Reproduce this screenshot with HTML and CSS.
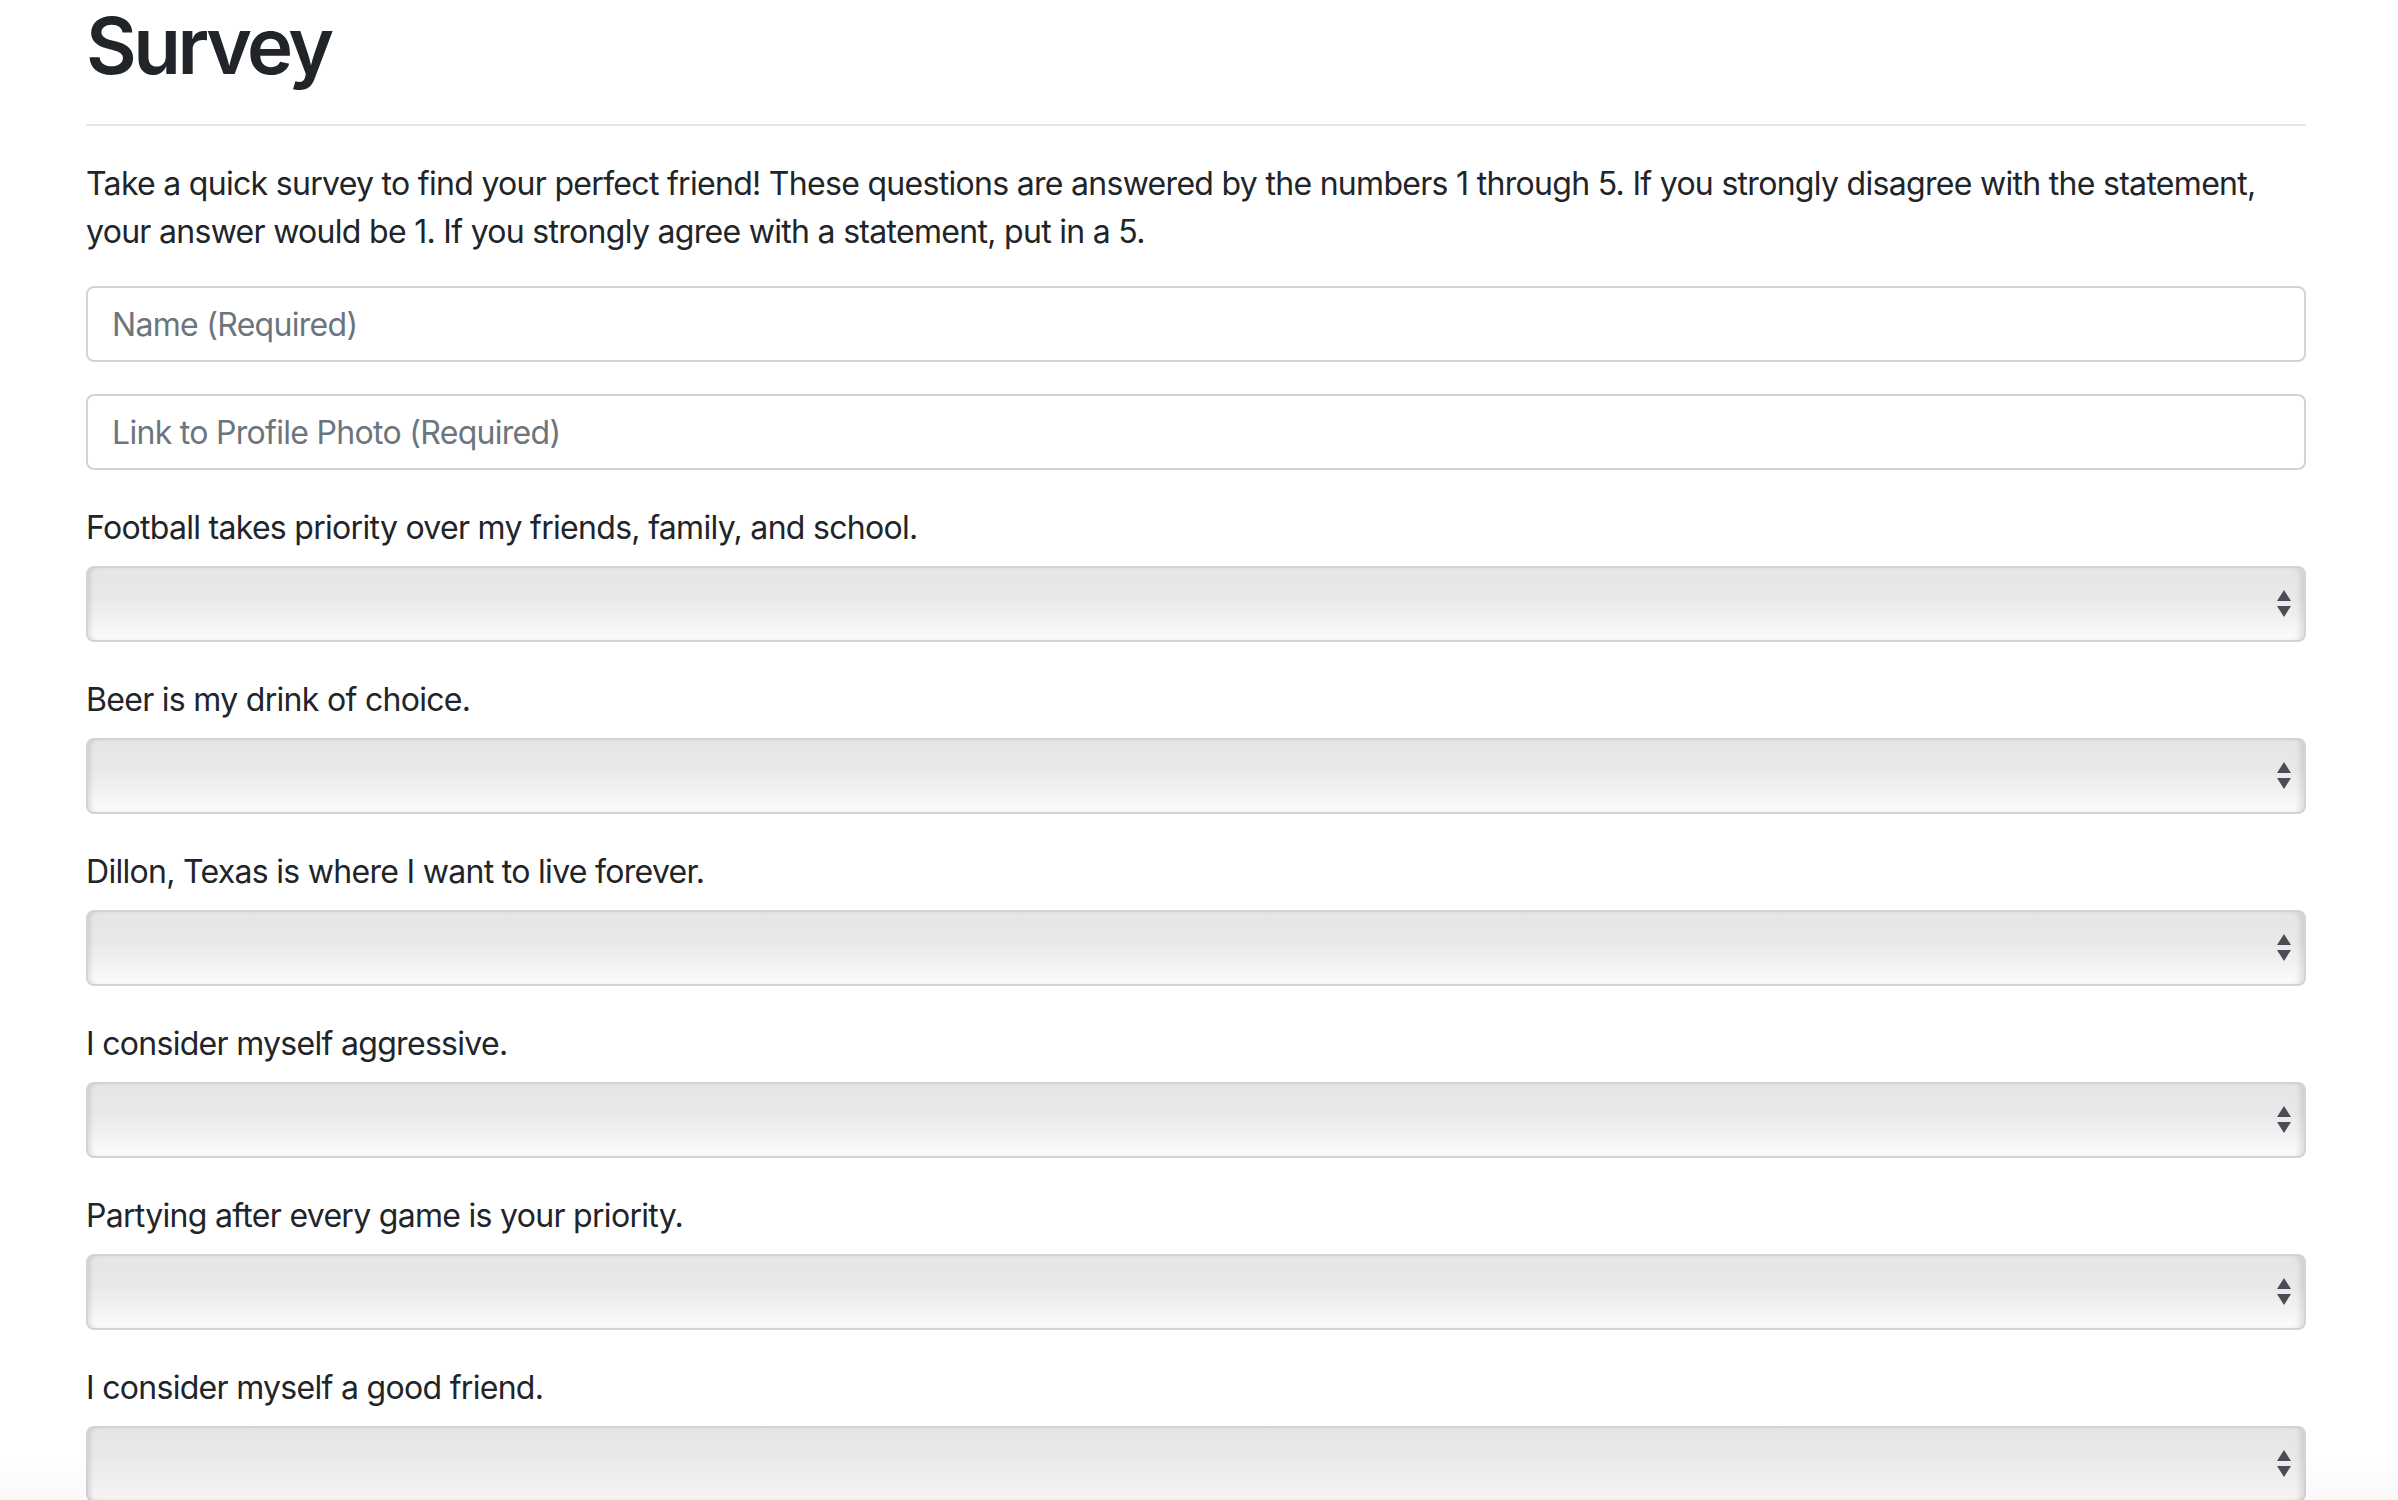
FILE: index.html
```html
<!DOCTYPE html>
<html lang="en">
<head>
<meta charset="utf-8">
<title>Survey</title>
<link rel="stylesheet" href="styles.css">
</head>
<body>
<div class="container">
  <h1 class="title">Survey</h1>
  <hr class="rule">
  <p class="intro">Take a quick survey to find your perfect friend! These questions are answered by the numbers 1 through 5. If you strongly disagree with the statement, your answer would be 1. If you strongly agree with a statement, put in a 5.</p>
  <form class="survey">
    <div class="form-group"><input class="form-control" type="text" placeholder="Name (Required)"></div>
    <div class="form-group"><input class="form-control" type="text" placeholder="Link to Profile Photo (Required)"></div>

    <div class="form-group">
      <label class="q-label">Football takes priority over my friends, family, and school.</label>
      <div class="select-wrap"><select class="select"><option></option></select>
        <svg class="arrows" viewBox="0 0 16 30" width="16" height="30"><path d="M8 1 L15 12 L1 12 Z M1 17 L15 17 L8 28 Z" fill="#4a4e54"/></svg></div>
    </div>
    <div class="form-group">
      <label class="q-label">Beer is my drink of choice.</label>
      <div class="select-wrap"><select class="select"><option></option></select>
        <svg class="arrows" viewBox="0 0 16 30" width="16" height="30"><path d="M8 1 L15 12 L1 12 Z M1 17 L15 17 L8 28 Z" fill="#4a4e54"/></svg></div>
    </div>
    <div class="form-group">
      <label class="q-label">Dillon, Texas is where I want to live forever.</label>
      <div class="select-wrap"><select class="select"><option></option></select>
        <svg class="arrows" viewBox="0 0 16 30" width="16" height="30"><path d="M8 1 L15 12 L1 12 Z M1 17 L15 17 L8 28 Z" fill="#4a4e54"/></svg></div>
    </div>
    <div class="form-group">
      <label class="q-label">I consider myself aggressive.</label>
      <div class="select-wrap"><select class="select"><option></option></select>
        <svg class="arrows" viewBox="0 0 16 30" width="16" height="30"><path d="M8 1 L15 12 L1 12 Z M1 17 L15 17 L8 28 Z" fill="#4a4e54"/></svg></div>
    </div>
    <div class="form-group">
      <label class="q-label">Partying after every game is your priority.</label>
      <div class="select-wrap"><select class="select"><option></option></select>
        <svg class="arrows" viewBox="0 0 16 30" width="16" height="30"><path d="M8 1 L15 12 L1 12 Z M1 17 L15 17 L8 28 Z" fill="#4a4e54"/></svg></div>
    </div>
    <div class="form-group">
      <label class="q-label">I consider myself a good friend.</label>
      <div class="select-wrap"><select class="select"><option></option></select>
        <svg class="arrows" viewBox="0 0 16 30" width="16" height="30"><path d="M8 1 L15 12 L1 12 Z M1 17 L15 17 L8 28 Z" fill="#4a4e54"/></svg></div>
    </div>
  </form>
</div>
<div class="bottom-fade"></div>
</body>
</html>
```
FILE: styles.css
```css
* { box-sizing: border-box; }
html, body { margin: 0; padding: 0; background: #fff; }
body {
  font-family: "Inter", "Roboto", "Liberation Sans", sans-serif;
  font-size: 32px;
  line-height: 48px;
  color: #212529;
  overflow: hidden;
  height: 1500px;
}
.container {
  width: 2220px;
  margin-left: 86px;
}
.title {
  margin: 0;
  font-family: "Inter", "Liberation Sans", sans-serif;
  font-size: 78px;
  font-weight: 600;
  line-height: 92px;
  letter-spacing: -3.5px;
  color: #212529;
  height: 96px;
}
.rule {
  margin: 28px 0 32px;
  border: 0;
  border-top: 2px solid #e6e6e6;
  height: 0;
}
.intro {
  margin: 0 0 32px;
  padding-top: 2px;
  margin-bottom: 30px;
  letter-spacing: -0.7px;
}
.survey { margin: 0; }
.form-group { margin-bottom: 32px; }
.form-control {
  display: block;
  width: 100%;
  height: 76px;
  padding: 12px 24px;
  font-family: inherit;
  font-size: 32px;
  letter-spacing: -0.7px;
  color: #495057;
  background: #fff;
  border: 2px solid #ced4da;
  border-radius: 8px;
  outline: none;
}
.form-control::placeholder { color: #6c757d; opacity: 1; }
.q-label {
  display: block;
  padding-top: 2px;
  margin-bottom: 14px;
  letter-spacing: -0.7px;
}
.select-wrap { position: relative; }
.select {
  display: block;
  width: 100%;
  height: 76px;
  -webkit-appearance: none;
  appearance: none;
  border: 2px solid #cfd4d9;
  border-radius: 8px;
  background: linear-gradient(to bottom, #e6e6e6 0%, #e8e8e8 40%, #f0f0f0 65%, #fbfbfb 100%);
  box-shadow: inset 5px 0 5px -3px rgba(0,0,0,0.12), inset -6px 0 6px -3px rgba(0,0,0,0.12);
  outline: none;
  font-size: 32px;
}
.arrows {
  position: absolute;
  right: 14px;
  top: 23px;
}
.bottom-fade {
  position: fixed;
  left: 0;
  right: 0;
  bottom: 0;
  height: 40px;
  background: linear-gradient(to bottom, rgba(0,0,0,0), rgba(0,0,0,0.025));
  pointer-events: none;
}
```
